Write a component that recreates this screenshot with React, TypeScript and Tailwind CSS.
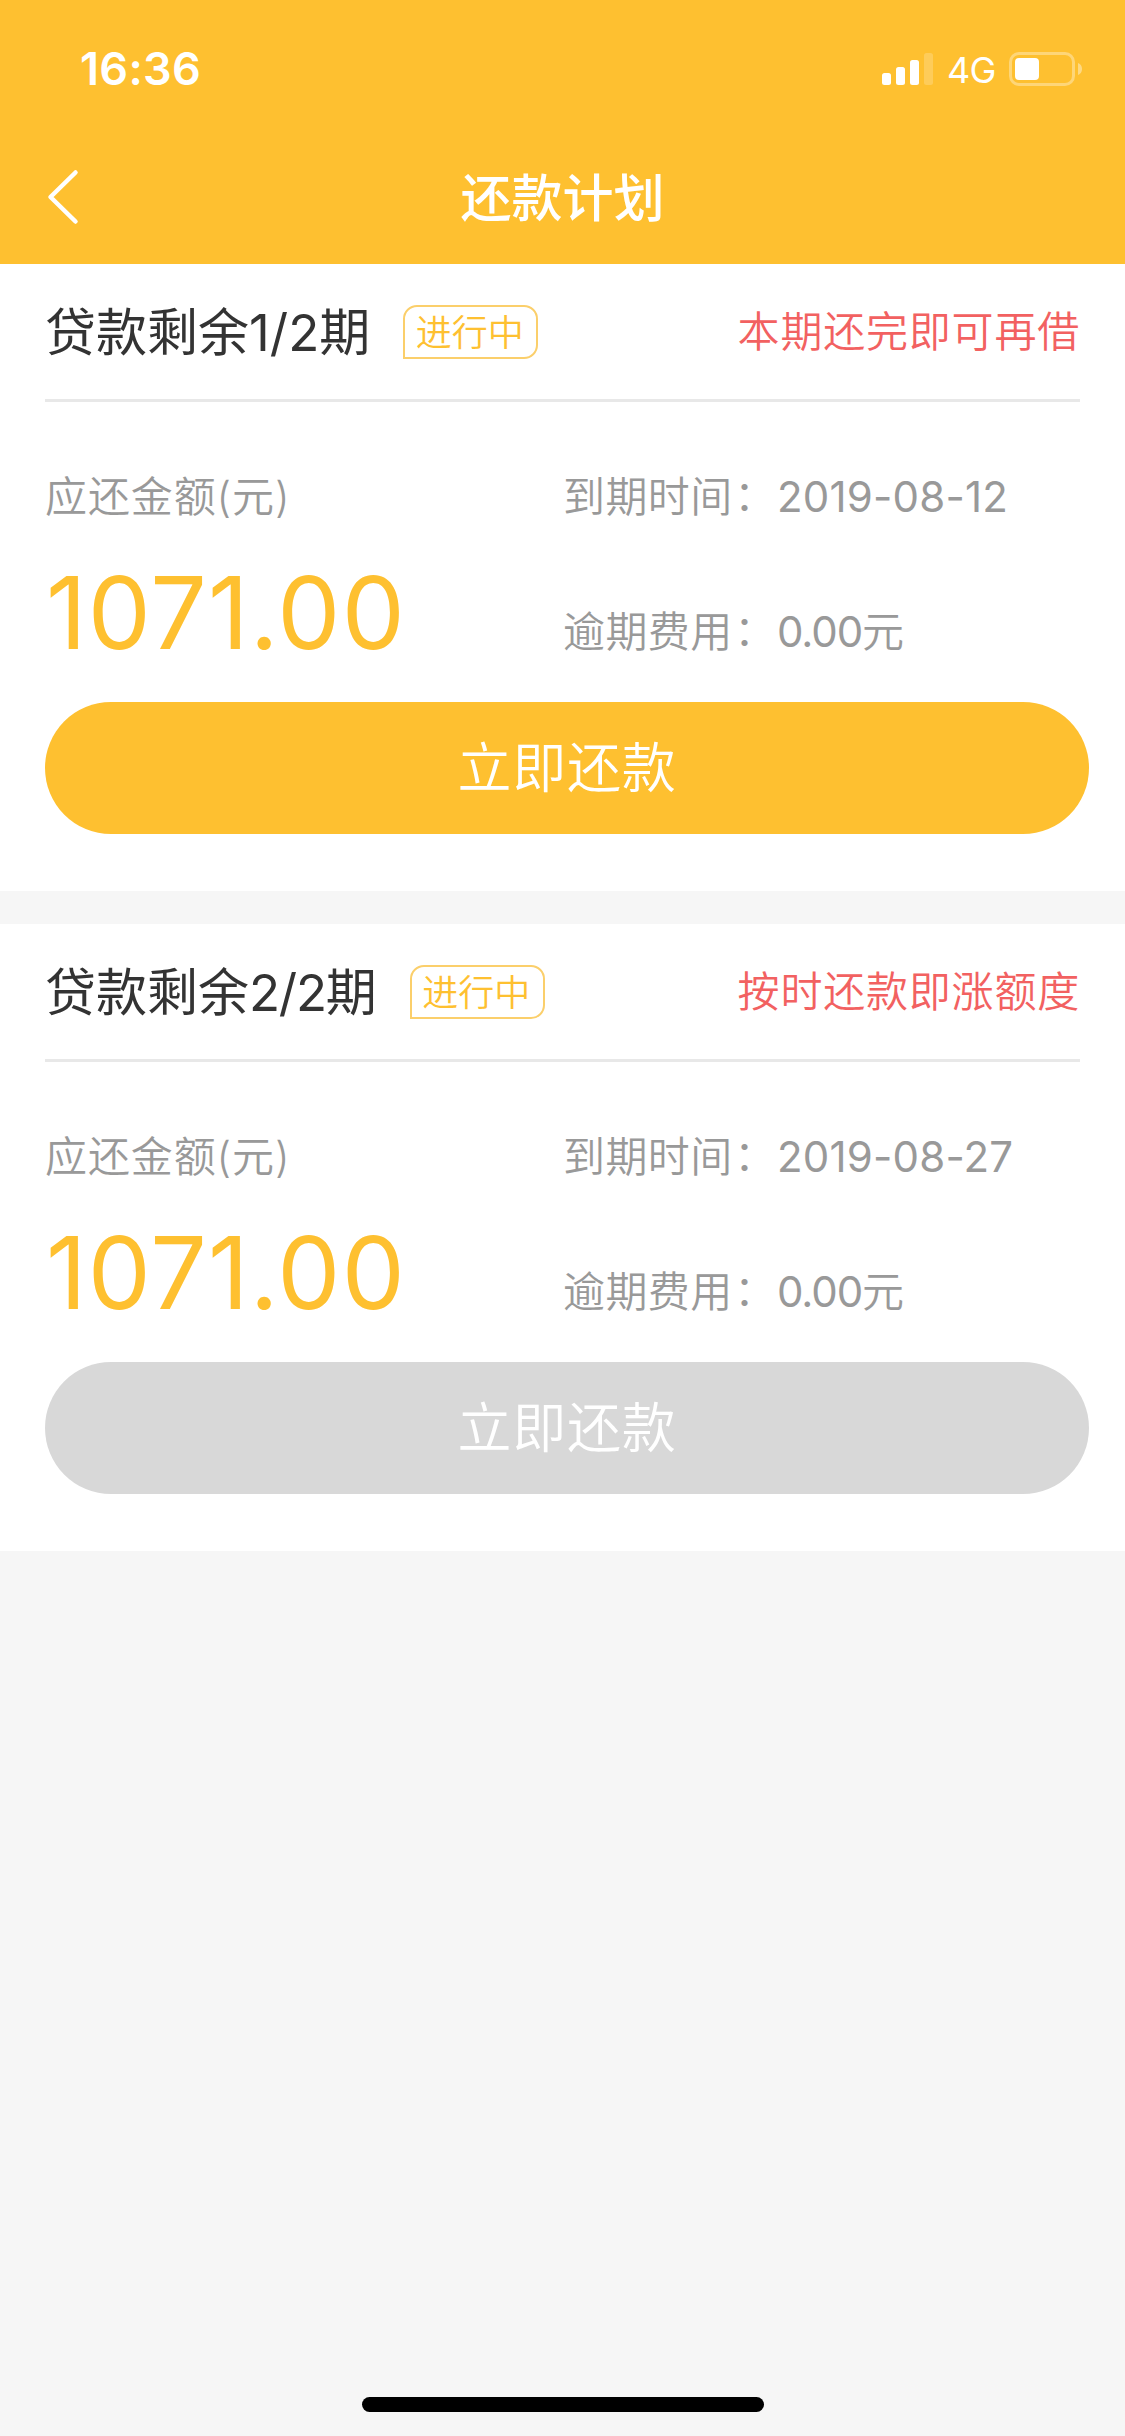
import React from 'react';
import clsx from 'clsx';

interface Installment {
  id: number;
  remaining: string;
  remainingClass: string;
  tip: string;
  amount: string;
  dueDate: string;
  overdueFee: string;
  payable: boolean;
}

const installments: Installment[] = [
  {
    id: 1,
    remaining: '1/2',
    remainingClass: 'tracking-normal',
    tip: '本期还完即可再借',
    amount: '1071.00',
    dueDate: '2019-08-12',
    overdueFee: '0.00',
    payable: true,
  },
  {
    id: 2,
    remaining: '2/2',
    remainingClass: 'tracking-[-1.3px]',
    tip: '按时还款即涨额度',
    amount: '1071.00',
    dueDate: '2019-08-27',
    overdueFee: '0.00',
    payable: false,
  },
];

const StatusBar: React.FC = () => (
  <div className="flex h-[132px] items-start justify-between pl-[80px] pr-[43px] pt-[42px] text-white">
    <span className="text-[45px] font-semibold leading-[54px] tracking-[0.3px]">16:36</span>
    <div className="flex h-[54px] items-center">
      <svg className="h-[34px] w-[52px]" viewBox="0 0 52 34" fill="currentColor">
        <rect x="0" y="21" width="9" height="12" rx="2.5" />
        <rect x="14" y="15" width="9" height="18" rx="2.5" />
        <rect x="28" y="8" width="9" height="25" rx="2.5" />
        <rect x="42" y="1" width="9" height="32" rx="2.5" opacity="0.2" />
      </svg>
      <span className="ml-[13px] w-[50px] whitespace-nowrap pt-[2px] text-[36px] leading-[52px] tracking-[-0.8px]">4G</span>
      <svg className="ml-[12px] h-[34px] w-[73px]" viewBox="0 0 73 34" fill="currentColor">
        <rect x="1.5" y="1.5" width="63" height="31" rx="8.5" fill="none" stroke="currentColor" strokeWidth="3" opacity="0.35" />
        <rect x="6" y="6" width="24" height="22" rx="4" />
        <path d="M69 11c2.6 1 4 3.3 4 6s-1.4 5-4 6z" opacity="0.4" />
      </svg>
    </div>
  </div>
);

const NavBar: React.FC = () => (
  <div className="grid h-[132px] grid-cols-[120px_1fr_120px] items-center text-white">
    <button className="pl-[46px]" aria-label="返回">
      <svg
        className="mb-[2px] h-[56px] w-[34px]"
        viewBox="0 0 34 56"
        fill="none"
        stroke="currentColor"
        strokeWidth="4.5"
        strokeLinecap="round"
        strokeLinejoin="round"
      >
        <path d="M29.5 3.5L4.5 28l25 24.5" />
      </svg>
    </button>
    <h1 className="pt-[2px] text-center text-[51px] font-medium leading-[72px]">还款计划</h1>
  </div>
);

const DetailRow: React.FC<{ label: string; children: React.ReactNode }> = ({ label, children }) => (
  <div className="flex h-[60px] items-center whitespace-nowrap">
    <span className="w-[171px] tracking-[0.4px]">{label}</span>
    <span className="relative -top-px w-[43px]">：</span>
    <span>{children}</span>
  </div>
);

const InstallmentCard: React.FC<{ item: Installment }> = ({ item }) => (
  <section className="h-[627px] bg-white px-[45px]">
    <div className="flex h-[138px] items-center justify-between border-b-[3px] border-[#e8e8e8]">
      <div className="flex items-center">
        <h2 className="whitespace-nowrap pt-[3px] text-[51px] leading-[72px] text-[#333333]">
          贷款剩余<span className={item.remainingClass}>{item.remaining}</span>期
        </h2>
        <span className="ml-[33px] flex h-[54px] w-[135px] items-center justify-center rounded-[14px] rounded-bl-none border-2 border-[#fbcf6b] pr-[2px] pt-[2px] text-[36px] font-[350] leading-none text-[#fec030]">
          进行中
        </span>
      </div>
      <span className="pt-px text-[42px] font-[350] leading-[60px] tracking-[0.8px] text-[#f26161]">{item.tip}</span>
    </div>

    <div className="flex h-[300px] pt-[65px] text-[42px] font-[350] leading-[60px] text-[#999999]">
      <div className="w-[518px]">
        <div className="h-[60px] tracking-[0.9px]">应还金额(元)</div>
        <div className="mt-[26px] pl-px text-[100px] font-normal leading-[120px] tracking-[1.2px] text-[#fec030]">{item.amount}</div>
      </div>
      <div className="flex flex-col gap-[75px]">
        <DetailRow label="到期时间">
          <span className="font-normal tracking-[0.2px]">{item.dueDate}</span>
        </DetailRow>
        <DetailRow label="逾期费用">
          <span className="font-normal tracking-[-1.1px]">{item.overdueFee}</span>元
        </DetailRow>
      </div>
    </div>

    <button
      disabled={!item.payable}
      className={clsx(
        'block h-[132px] w-[1044px] rounded-full pt-[2px] text-[54px] font-[350] leading-[76px] tracking-[0.8px] text-white',
        item.payable ? 'bg-[#fec030]' : 'bg-[#d8d8d8]'
      )}
    >
      立即还款
    </button>
  </section>
);

const App: React.FC = () => {
  return (
    <div className="flex h-[2436px] w-[1125px] flex-col overflow-hidden bg-[#f6f6f6] font-['Inter','Noto_Sans_CJK_SC',sans-serif]">
      <header className="bg-[#fec030]">
        <StatusBar />
        <NavBar />
      </header>
      <main className="flex flex-1 flex-col gap-[33px]">
        {installments.map((item) => (
          <InstallmentCard key={item.id} item={item} />
        ))}
      </main>
      <div className="mb-[24px] h-[15px] w-[402px] self-center rounded-full bg-black" />
    </div>
  );
};

export default App;
